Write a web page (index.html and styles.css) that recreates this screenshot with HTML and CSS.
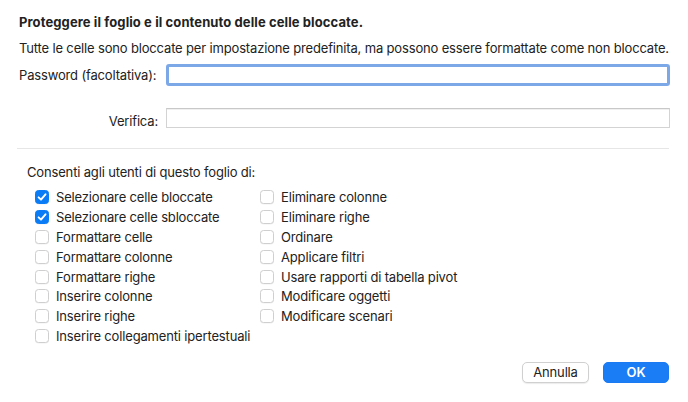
FILE: index.html
```html
<!DOCTYPE html>
<html lang="it">
<head>
<meta charset="utf-8">
<link rel="stylesheet" href="styles.css">
</head>
<body>
<div class="dialog">
  <div class="title">Proteggere il foglio e il contenuto delle celle bloccate.</div>
  <div class="subtitle">Tutte le celle sono bloccate per impostazione predefinita, ma possono essere formattate come non bloccate.</div>
  <div class="field field-pw">
    <label class="field-label">Password (facoltativa):</label>
    <div class="input input-focus"></div>
  </div>
  <div class="field field-verify">
    <label class="field-label">Verifica:</label>
    <div class="input"></div>
  </div>
  <div class="separator"></div>
  <div class="allow">Consenti agli utenti di questo foglio di:</div>
  <div class="options">
    <div class="col">
      <div class="opt"><span class="cb checked"><svg viewBox="0 0 14 14" width="14" height="14"><path d="M3.6 7.3 L6 9.7 L10.5 4.3" fill="none" stroke="#fff" stroke-width="1.9" stroke-linecap="round" stroke-linejoin="round"/></svg></span>Selezionare celle bloccate</div>
      <div class="opt"><span class="cb checked"><svg viewBox="0 0 14 14" width="14" height="14"><path d="M3.6 7.3 L6 9.7 L10.5 4.3" fill="none" stroke="#fff" stroke-width="1.9" stroke-linecap="round" stroke-linejoin="round"/></svg></span>Selezionare celle sbloccate</div>
      <div class="opt"><span class="cb"></span>Formattare celle</div>
      <div class="opt"><span class="cb"></span>Formattare colonne</div>
      <div class="opt"><span class="cb"></span>Formattare righe</div>
      <div class="opt"><span class="cb"></span>Inserire colonne</div>
      <div class="opt"><span class="cb"></span>Inserire righe</div>
      <div class="opt"><span class="cb"></span>Inserire collegamenti ipertestuali</div>
    </div>
    <div class="col">
      <div class="opt"><span class="cb"></span>Eliminare colonne</div>
      <div class="opt"><span class="cb"></span>Eliminare righe</div>
      <div class="opt"><span class="cb"></span>Ordinare</div>
      <div class="opt"><span class="cb"></span>Applicare filtri</div>
      <div class="opt"><span class="cb"></span>Usare rapporti di tabella pivot</div>
      <div class="opt"><span class="cb"></span>Modificare oggetti</div>
      <div class="opt"><span class="cb"></span>Modificare scenari</div>
    </div>
  </div>
  <div class="buttons">
    <button class="btn btn-cancel">Annulla</button>
    <button class="btn btn-ok">OK</button>
  </div>
</div>
</body>
</html>
```

FILE: styles.css
```css
html, body {
  margin: 0;
  padding: 0;
  background: #ffffff;
}
body {
  font-family: "Inter", "Liberation Sans", sans-serif;
  font-size: 13px;
  letter-spacing: -0.16px;
  color: #222222;
}
.dialog {
  width: 688px;
  height: 402px;
  box-sizing: border-box;
  padding: 14px 19px 0 19px;
  display: flex;
  flex-direction: column;
}
.title {
  font-weight: 700;
  letter-spacing: 0.1px;
  line-height: 16px;
  height: 16px;
}
.subtitle {
  margin-top: 10px;
  line-height: 16px;
  height: 16px;
  white-space: nowrap;
}
.field {
  display: flex;
  align-items: center;
}
.field-label {
  width: 147px;
  text-align: right;
  padding-right: 8px;
  box-sizing: border-box;
  white-space: nowrap;
}
.field-pw {
  margin-top: 8px;
  height: 22px;
}
.field-pw .field-label {
  text-align: left;
  padding-right: 0;
}
.field-verify {
  margin-top: 22px;
  height: 20px;
}
.field-verify .field-label {
  padding-top: 5px;
}
.input {
  flex: 1;
  box-sizing: border-box;
  background: #fff;
  margin-right: -1px;
}
.input-focus {
  height: 22px;
  border: 3px solid #7ca8e8;
  border-radius: 3px;
}
.field-verify .input {
  height: 20px;
  border: 1px solid #d3d3d3;
  border-top-color: #c8c8c8;
  box-shadow: inset 0 1px 0 #f0f0f0;
}
.separator {
  margin-top: 20px;
  margin-left: -2px;
  height: 1px;
  background: #e6e6e6;
}
.allow {
  margin-top: 15px;
  padding-left: 8px;
  line-height: 16px;
}
.options {
  display: flex;
  margin-top: 7px;
  padding-left: 16px;
}
.col {
  display: flex;
  flex-direction: column;
}
.col:first-child {
  width: 225px;
}
.opt {
  display: flex;
  align-items: center;
  height: 19.9px;
  white-space: nowrap;
}
.cb {
  width: 14px;
  height: 14px;
  box-sizing: border-box;
  border: 1px solid #cfcfcf;
  border-radius: 3.5px;
  background: #fff;
  margin-right: 7px;
  flex: none;
  display: flex;
  align-items: center;
  justify-content: center;
  box-shadow: 0 0.5px 0.5px rgba(0,0,0,0.06);
}
.cb.checked {
  background: #0a7cf6;
  border-color: #0a7cf6;
}
.cb svg {
  display: block;
  margin: -1px;
}
.buttons {
  margin-top: auto;
  margin-bottom: 19px;
  display: flex;
  justify-content: flex-end;
  gap: 14px;
}
.btn {
  font-family: "Inter", "Liberation Sans", sans-serif;
  font-size: 13px;
  letter-spacing: -0.16px;
  height: 21px;
  border-radius: 5px;
  padding: 0;
  line-height: 19px;
}
.btn-cancel {
  width: 67px;
  background: #fff;
  border: 1px solid #d0d0d0;
  color: #222222;
  box-shadow: 0 1px 1px rgba(0,0,0,0.08);
}
.btn-ok {
  width: 66px;
  background: #1a7df6;
  border: 1px solid #1a7af2;
  color: #fff;
  font-weight: 600;
}
```
